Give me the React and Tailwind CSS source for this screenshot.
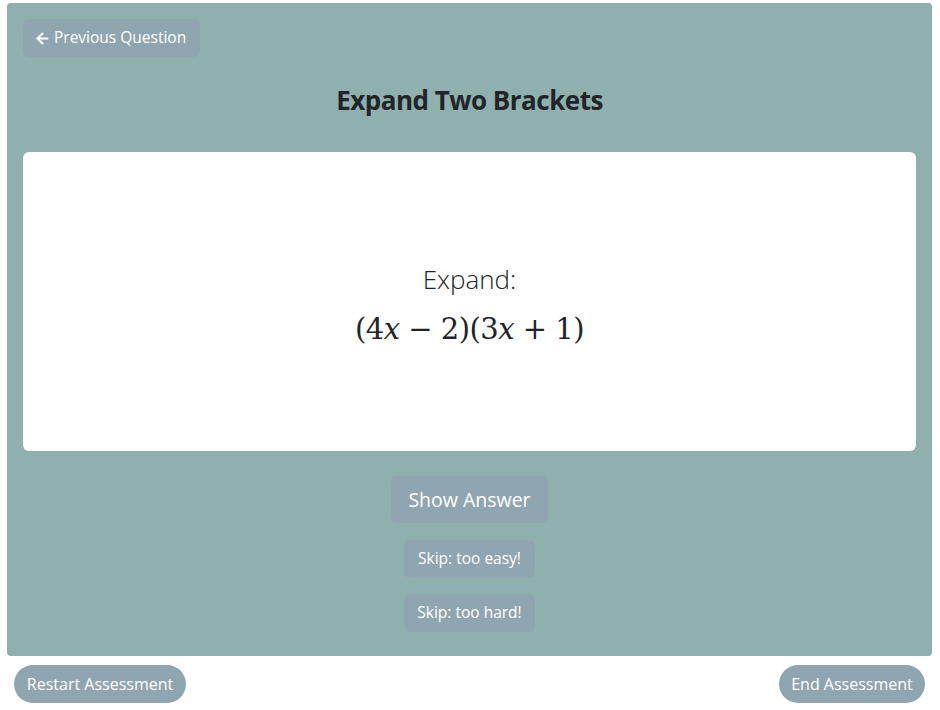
import React from "react";
import { ArrowLeft } from "lucide-react";

export default function App() {
  return (
    <div className="w-[940px] h-[710px] bg-white font-['Open_Sans',sans-serif] pt-[3px] px-[7px]">
      {/* Question panel */}
      <div className="bg-[#8fb0ad] rounded-[4px] h-[653px] w-[925px] px-4 pt-4 flex flex-col">
        <div>
          <button className="bg-[#8fa6b0] text-white rounded-md h-[38px] w-[177px] flex items-center gap-[3px] pl-[11px] text-[15.5px]">
            <ArrowLeft className="w-[17px] h-[17px]" strokeWidth={3} />
            Previous Question
          </button>
        </div>

        <h2 className="text-center text-[26px] font-bold text-[#212529] mt-[24px] tracking-[-0.5px]">
          Expand Two Brackets
        </h2>

        {/* Question card */}
        <div className="bg-white rounded-md mt-[32px] h-[299px] flex flex-col items-center justify-center pt-[6px]">
          <p className="text-[26px] font-light text-[#212529] leading-none">Expand:</p>
          <p className="mt-[23px] text-[29px] text-[#212529] leading-none font-['DejaVu_Serif',serif] tracking-[-0.5px]">
            (4<i>x</i> − 2)(3<i>x</i> + 1)
          </p>
        </div>

        <div className="flex flex-col items-center mt-[25px]">
          <button className="bg-[#8fa6b0] text-white rounded-md h-[47px] w-[157px] text-[19.5px]">
            Show Answer
          </button>
          <button className="bg-[#8fa6b0] text-white rounded-md h-[38px] w-[131px] text-[15.5px] mt-[17px]">
            Skip: too easy!
          </button>
          <button className="bg-[#8fa6b0] text-white rounded-md h-[38px] w-[131px] text-[15.5px] mt-4">
            Skip: too hard!
          </button>
        </div>
      </div>

      {/* Footer actions */}
      <div className="flex justify-between mt-[9px] pl-[7px] pr-2">
        <button className="bg-[#8fa6b0] text-white rounded-full h-[38px] w-[172px] text-[16px]">
          Restart Assessment
        </button>
        <button className="bg-[#8fa6b0] text-white rounded-full h-[38px] w-[146px] text-[16px]">
          End Assessment
        </button>
      </div>
    </div>
  );
}
